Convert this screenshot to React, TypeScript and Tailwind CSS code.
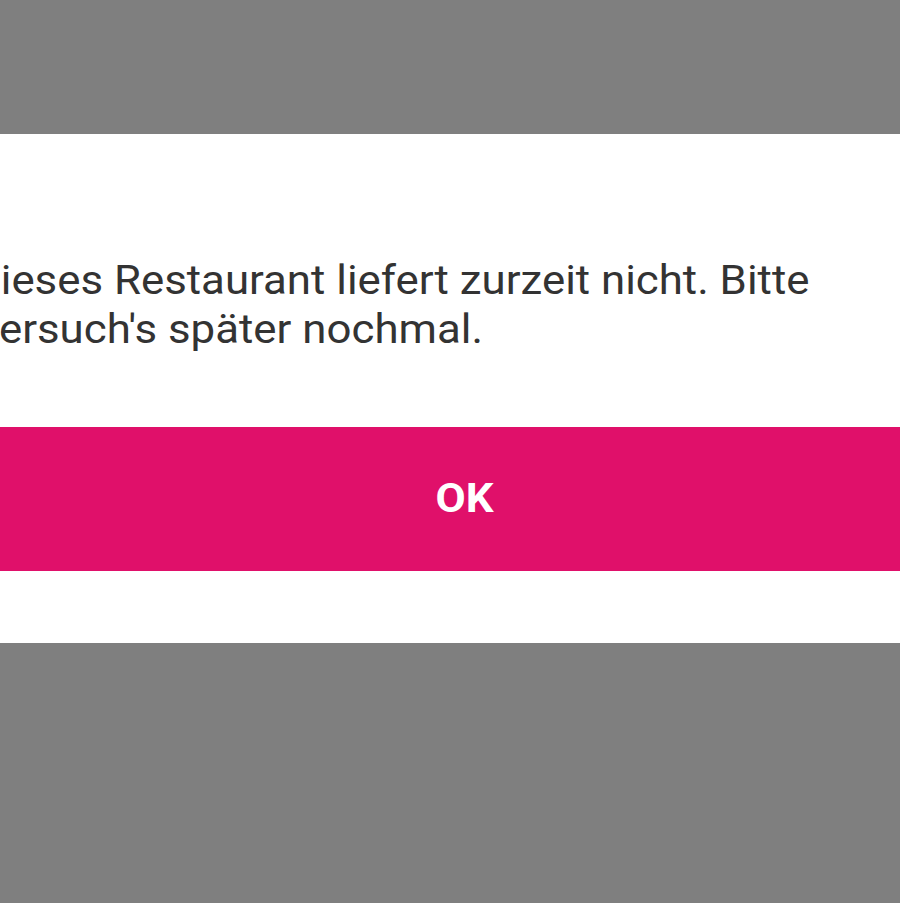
export default function App() {
  return (
    <div
      className="w-[900px] h-[903px] bg-[#7f7f7f] overflow-hidden flex flex-col"
      style={{ fontFamily: "Roboto, 'Noto Sans', sans-serif" }}
    >
      <div className="h-[134px] shrink-0" />
      <div className="h-[509px] shrink-0 bg-white ml-[-30px] w-[990px] flex flex-col">
        <div className="pt-[122px] pl-[2px]">
          <p className="text-[40px] leading-[49px] text-[#333333] whitespace-nowrap origin-left scale-x-[1.095]">
            Dieses Restaurant liefert zurzeit nicht. Bitte
            <br />
            Versuch's später nochmal.
          </p>
        </div>
        <div className="mt-[73px] h-[144px] bg-[#e0106a] flex items-center justify-center">
          <span className="text-white font-bold text-[40px] scale-x-[1.095]">OK</span>
        </div>
      </div>
    </div>
  );
}
